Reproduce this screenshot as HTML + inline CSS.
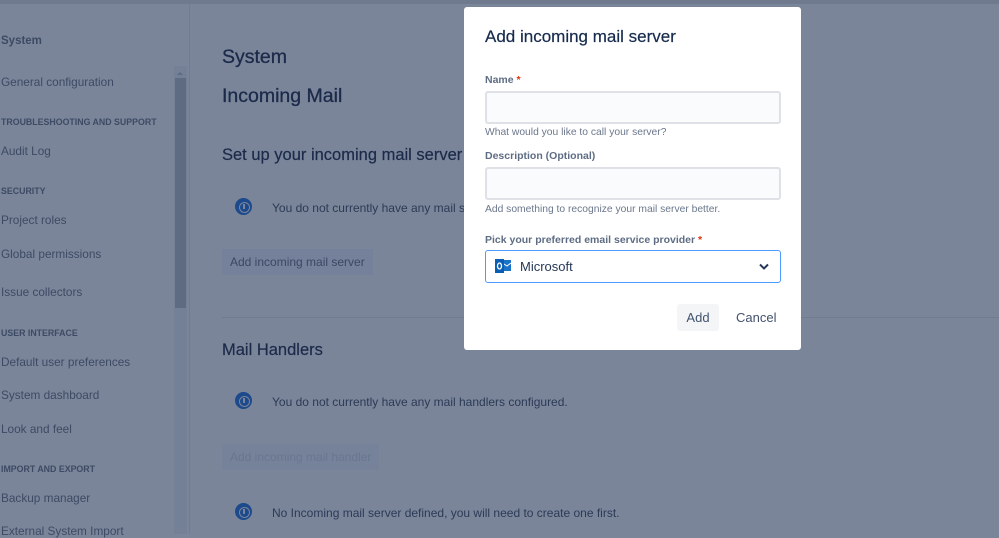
<!DOCTYPE html>
<html><head><meta charset="utf-8"><style>
*{margin:0;padding:0;box-sizing:border-box}
body{width:999px;height:534px;overflow:hidden;background:#7a8599;font-family:"Liberation Sans",sans-serif;position:relative}
.a{position:absolute;white-space:nowrap}
.top{left:0;top:0;width:999px;height:4px;background:#6f7a8e}
.sb{left:0;top:4px;width:190px;height:530px;border-right:1px solid #717c90}
.s{font-size:11.8px;color:#3d4a64;left:1px}
.h{font-size:8.8px;font-weight:bold;color:#3d4a64;left:1px}
.track{left:174px;top:66px;width:13px;height:468px;background:#748095}
.thumb{left:175px;top:78px;width:11px;height:230px;background:#5f6b80}
.t{color:#1c2a4a;left:222px}
.p{font-size:12px;color:#2c3a56;left:272px}
.btn{left:222px;height:26px;background:#75809a;font-size:12px;color:#3b4864;padding:6px 8px}
.ic{left:235px;width:17px;height:17px;border-radius:50%;background:#1d4a8c;border:2px solid #1d4a8c}
.ic:after{content:"";position:absolute;left:2px;top:2px;width:9px;height:9px;border:1.5px solid #7a8599;border-radius:50%}
.ic:before{content:"";position:absolute;left:6px;top:4px;width:1.5px;height:5px;background:#7a8599}
.modal{left:464px;top:7px;width:337px;height:343px;background:#fff;border-radius:3px}
.lab{font-size:10.5px;font-weight:bold;color:#5e6c84}
.lab span{color:#de350b}
.in{left:21px;width:296px;height:33px;background:#fafbfc;border:2px solid #dfe1e6;border-radius:3px}
.help{font-size:10.3px;color:#6b778c;left:21px}
</style></head><body>
<div class="a top"></div>
<div class="a sb"></div>
<div class="a track"></div><div class="a thumb"></div>
<div class="a" style="left:177px;top:69px;width:0;height:0;border:3px solid transparent;border-bottom:3px solid #5f6b80"></div>
<div class="a s" style="top:35px;font-weight:bold;font-size:11.5px">System</div>
<div class="a s" style="top:75px">General configuration</div>
<div class="a h" style="top:117px">TROUBLESHOOTING AND SUPPORT</div>
<div class="a s" style="top:144px">Audit Log</div>
<div class="a h" style="top:186px">SECURITY</div>
<div class="a s" style="top:213px">Project roles</div>
<div class="a s" style="top:247px">Global permissions</div>
<div class="a s" style="top:285px">Issue collectors</div>
<div class="a h" style="top:328px">USER INTERFACE</div>
<div class="a s" style="top:355px">Default user preferences</div>
<div class="a s" style="top:388px">System dashboard</div>
<div class="a s" style="top:422px">Look and feel</div>
<div class="a h" style="top:464px">IMPORT AND EXPORT</div>
<div class="a s" style="top:491px">Backup manager</div>
<div class="a s" style="top:524px">External System Import</div>

<div class="a t" style="top:46px;font-size:19.5px;-webkit-text-stroke:0.3px #1c2a4a">System</div>
<div class="a t" style="top:85px;font-size:19.5px;-webkit-text-stroke:0.3px #1c2a4a">Incoming Mail</div>
<div class="a t" style="top:146px;font-size:16.5px;-webkit-text-stroke:0.2px #1c2a4a">Set up your incoming mail server</div>
<div class="a ic" style="top:198px"></div>
<div class="a p" style="top:201px">You do not currently have any mail servers configured.</div>
<div class="a btn" style="top:249px">Add incoming mail server</div>
<div class="a" style="left:222px;top:317px;width:777px;height:1px;background:#717c90"></div>
<div class="a t" style="top:341px;font-size:16.5px;-webkit-text-stroke:0.2px #1c2a4a">Mail Handlers</div>
<div class="a ic" style="top:392px"></div>
<div class="a p" style="top:395px">You do not currently have any mail handlers configured.</div>
<div class="a btn" style="top:444px;color:#6a7690;background:#76819a">Add incoming mail handler</div>
<div class="a ic" style="top:503px"></div>
<div class="a p" style="top:506px">No Incoming mail server defined, you will need to create one first.</div>

<div class="a modal">
<div class="a" style="left:21px;top:20px;font-size:17px;color:#172b4d;-webkit-text-stroke:0.2px #172b4d">Add incoming mail server</div>
<div class="a lab" style="left:21px;top:67px">Name <span>*</span></div>
<div class="a in" style="top:84px"></div>
<div class="a help" style="top:120px">What would you like to call your server?</div>
<div class="a lab" style="left:21px;top:143px">Description (Optional)</div>
<div class="a in" style="top:160px"></div>
<div class="a help" style="top:197px">Add something to recognize your mail server better.</div>
<div class="a lab" style="left:21px;top:227px">Pick your preferred email service provider <span>*</span></div>
<div class="a in" style="top:243px;background:#fff;border:1px solid #4c9aff;height:33px"></div>
<svg class="a" style="left:31px;top:251px" width="17" height="16" viewBox="0 0 17 16"><rect x="5" y="2" width="11" height="11" fill="#1a73c6"/><path d="M9 6l3 2 4-3" stroke="#fff" fill="none"/><rect x="0" y="1" width="9" height="14" fill="#0a5eb3"/><ellipse cx="4.5" cy="8" rx="2" ry="3" stroke="#fff" stroke-width="1.3" fill="none"/></svg>
<div class="a" style="left:56px;top:252px;font-size:13px;color:#253858">Microsoft</div>
<svg class="a" style="left:295px;top:256px" width="10" height="7"><path d="M1 1.5l4 4 4-4" stroke="#253858" stroke-width="2" fill="none"/></svg>
<div class="a" style="left:213px;top:297px;width:42px;height:27px;background:#f4f5f7;border-radius:3px;font-size:13px;color:#42526e;text-align:center;line-height:27px">Add</div>
<div class="a" style="left:272px;top:303px;font-size:13px;color:#42526e">Cancel</div>
</div>
</body></html>
